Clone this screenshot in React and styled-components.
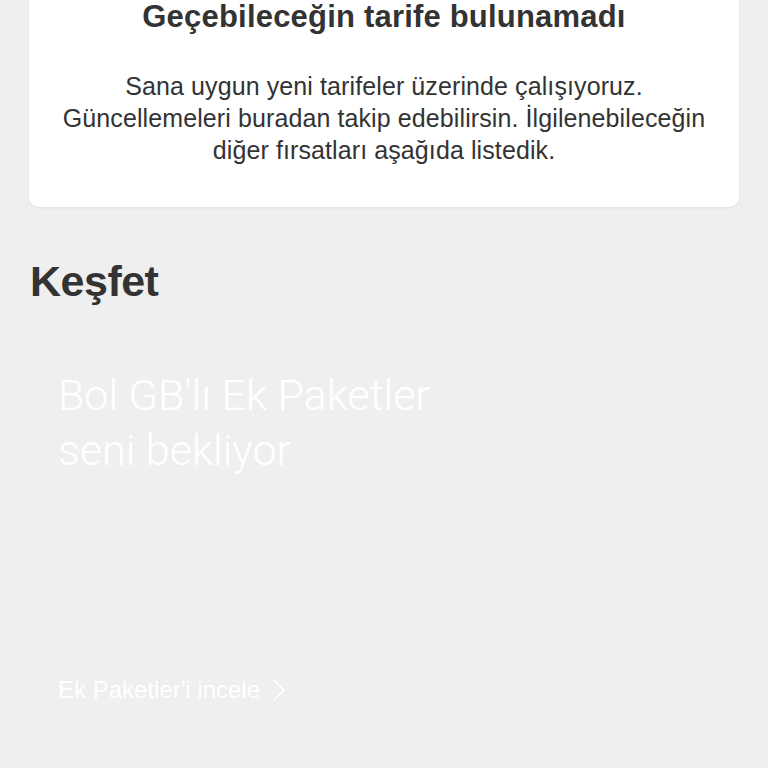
import React from "react";
import styled, { createGlobalStyle } from "styled-components";

const GlobalStyle = createGlobalStyle`
  *, *::before, *::after {
    box-sizing: border-box;
  }
  html, body {
    margin: 0;
    padding: 0;
    background: #efefef;
    font-family: "Liberation Sans", Arial, sans-serif;
    color: #333333;
  }
`;

const App = () => {
  return (
    <Page>
      <GlobalStyle />
      <Card>
        <Title>Geçebileceğin tarife bulunamadı</Title>
        <Text>
          Sana uygun yeni tarifeler üzerinde çalışıyoruz.
          <br />
          Güncellemeleri buradan takip edebilirsin. İlgilenebileceğin
          <br />
          diğer fırsatları aşağıda listedik.
        </Text>
      </Card>

      <Section>
        <Heading>Keşfet</Heading>
        <Banner>
          <BannerTitle>
            Bol GB'lı Ek Paketler
            <br />
            seni bekliyor
          </BannerTitle>
          <BannerLink>
            Ek Paketler'i incele
            <svg width="14" height="24" viewBox="0 0 14 24" fill="none">
              <path
                d="M2 2l10 10-10 10"
                stroke="#ffffff"
                strokeWidth="1.6"
                strokeLinecap="round"
                strokeLinejoin="round"
              />
            </svg>
          </BannerLink>
        </Banner>
      </Section>
    </Page>
  );
};

const Page = styled.div`
  width: 768px;
  min-height: 768px;
  overflow: hidden;
`;

const Card = styled.div`
  margin: 0 29px;
  padding: 0 10px 41px;
  background: #ffffff;
  border-radius: 0 0 10px 10px;
  box-shadow: 0 1px 3px rgba(0, 0, 0, 0.06);
  text-align: center;
`;

const Title = styled.h2`
  margin: 0;
  font-size: 31px;
  line-height: 34px;
  font-weight: 700;
  letter-spacing: 0.2px;
`;

const Text = styled.p`
  margin: 36px 0 0;
  font-size: 25px;
  line-height: 32px;
  font-weight: 400;
  letter-spacing: 0.1px;
`;

const Section = styled.section`
  padding: 0 29px;
`;

const Heading = styled.h1`
  margin: 50px 0 0 1px;
  font-size: 43px;
  line-height: 48px;
  font-weight: 700;
  letter-spacing: -0.5px;
`;

const Banner = styled.div`
  height: 420px;
  margin-top: 30px;
  padding: 33px 29px 0;
  display: flex;
  flex-direction: column;
  border-radius: 10px;
`;

const BannerTitle = styled.div`
  font-family: Roboto, "Liberation Sans", sans-serif;
  font-weight: 300;
  font-size: 43px;
  line-height: 55px;
  color: #ffffff;
`;

const BannerLink = styled.div`
  margin-top: auto;
  margin-bottom: 50px;
  display: flex;
  align-items: center;
  gap: 12px;
  font-size: 24px;
  line-height: 30px;
  color: #ffffff;
`;

export default App;
